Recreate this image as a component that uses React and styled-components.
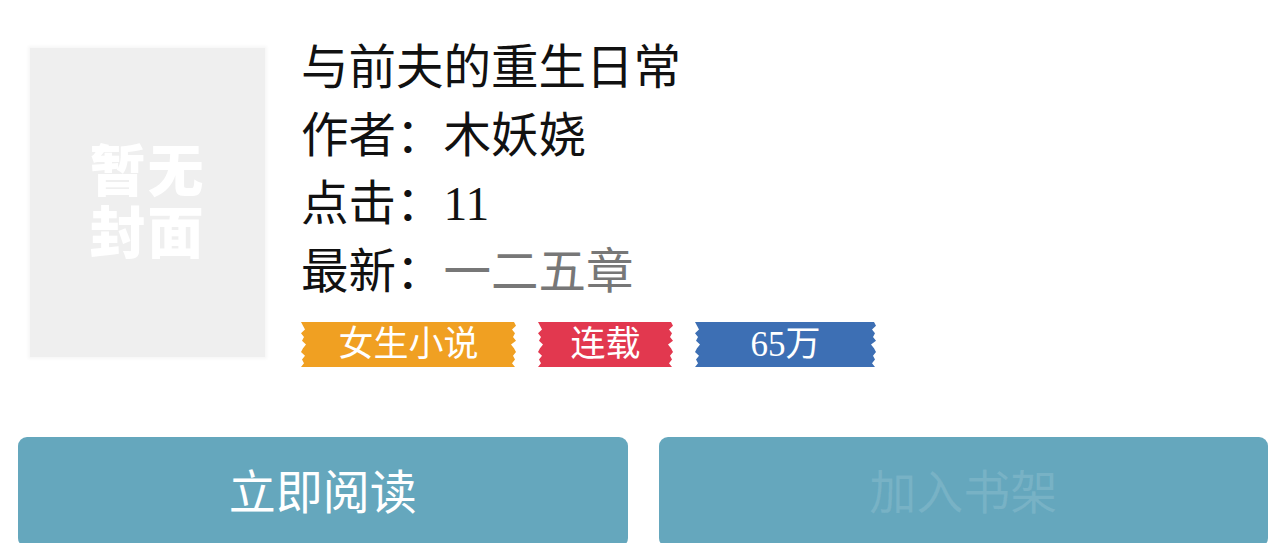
import styled, { createGlobalStyle } from 'styled-components'

const GlobalStyle = createGlobalStyle`
    html, body {
        margin: 0;
        padding: 0;
        background: #fff;
    }
    body {
        font-family: "Liberation Serif", "Noto Sans CJK SC", serif;
    }
`

// ragged brush edges for the tags
const leftEdge = [0, 3, 1, 4, 0, 2, 5, 1, 3, 0, 4, 2, 0]
const rightEdge = [2, 0, 4, 1, 3, 0, 5, 2, 0, 3, 1, 4, 1]
const raggedClip = (() => {
    const n = leftEdge.length - 1
    const right = rightEdge.map((o, i) => `calc(100% - ${o}px) ${(i / n) * 100}%`)
    const left = leftEdge.map((o, i) => `${o}px ${((n - i) / n) * 100}%`)
    return `polygon(${[...right, ...left].join(', ')})`
})()

const tags = [
    { label: '女生小说', color: '#f0a022', width: 215 },
    { label: '连载', color: '#e2384f', width: 135 },
    { label: '65万', color: '#3d6fb4', width: 181 },
]

const App = () => (
    <Page>
        <GlobalStyle />
        <Book>
            <Cover>
                <CoverText>
                    <span>暂</span><span>无</span>
                    <span>封</span><span>面</span>
                </CoverText>
            </Cover>
            <Info>
                <Line>与前夫的重生日常</Line>
                <Line>作者：<Value>木妖娆</Value></Line>
                <Line>点击：<Value>11</Value></Line>
                <Line>最新：<Value $muted>一二五章</Value></Line>
                <Tags>
                    {tags.map(t => (
                        <Tag key={t.label} $color={t.color} $width={t.width}>{t.label}</Tag>
                    ))}
                </Tags>
            </Info>
        </Book>
        <Actions>
            <Button>立即阅读</Button>
            <Button $faded>加入书架</Button>
        </Actions>
    </Page>
)

const Page = styled.div`
    width: 1284px;
    height: 543px;
    overflow: hidden;
    background: #fff;
`

const Book = styled.section`
    display: flex;
    align-items: flex-start;
    padding: 34px 0 0 30px;
    gap: 36px;
`

const Cover = styled.div`
    width: 235px;
    height: 309px;
    margin-top: 14px;
    background: #efefef;
    box-shadow: 0 0 3px 2px #f7f7f7;
    display: flex;
    align-items: center;
    justify-content: center;
`

const CoverText = styled.div`
    display: grid;
    grid-template-columns: repeat(2, 58px);
    grid-auto-rows: 62px;
    margin-right: 2px;
    margin-bottom: 10px;
    font-family: "Noto Sans CJK SC", sans-serif;
    font-weight: 900;
    font-size: 56px;
    line-height: 62px;
    color: #fff;
    text-align: center;
`

const Info = styled.div`
    display: flex;
    flex-direction: column;
`

const Line = styled.div`
    font-size: 47.5px;
    line-height: 68px;
    color: #111;
    white-space: nowrap;
`

const Value = styled.span`
    color: ${({ $muted }) => ($muted ? '#777' : '#111')};
`

const Tags = styled.div`
    display: flex;
    gap: 22px;
    margin-top: 16px;
`

const Tag = styled.span`
    width: ${({ $width }) => $width}px;
    height: 45px;
    background: ${({ $color }) => $color};
    clip-path: ${raggedClip};
    color: #fff;
    font-size: 35px;
    line-height: 45px;
    text-align: center;
`

const Actions = styled.div`
    display: grid;
    grid-template-columns: 1fr 1fr;
    gap: 31px;
    padding: 0 16px 0 18px;
    margin-top: 70px;
`

const Button = styled.button`
    height: 110px;
    border: none;
    border-radius: 9px;
    background: #65a7bd;
    color: ${({ $faded }) => ($faded ? 'rgba(255, 255, 255, 0.12)' : '#fff')};
    font-family: "Noto Sans CJK SC", sans-serif;
    font-size: 47px;
    padding: 0 0 8px;
    cursor: pointer;
`

export default App
